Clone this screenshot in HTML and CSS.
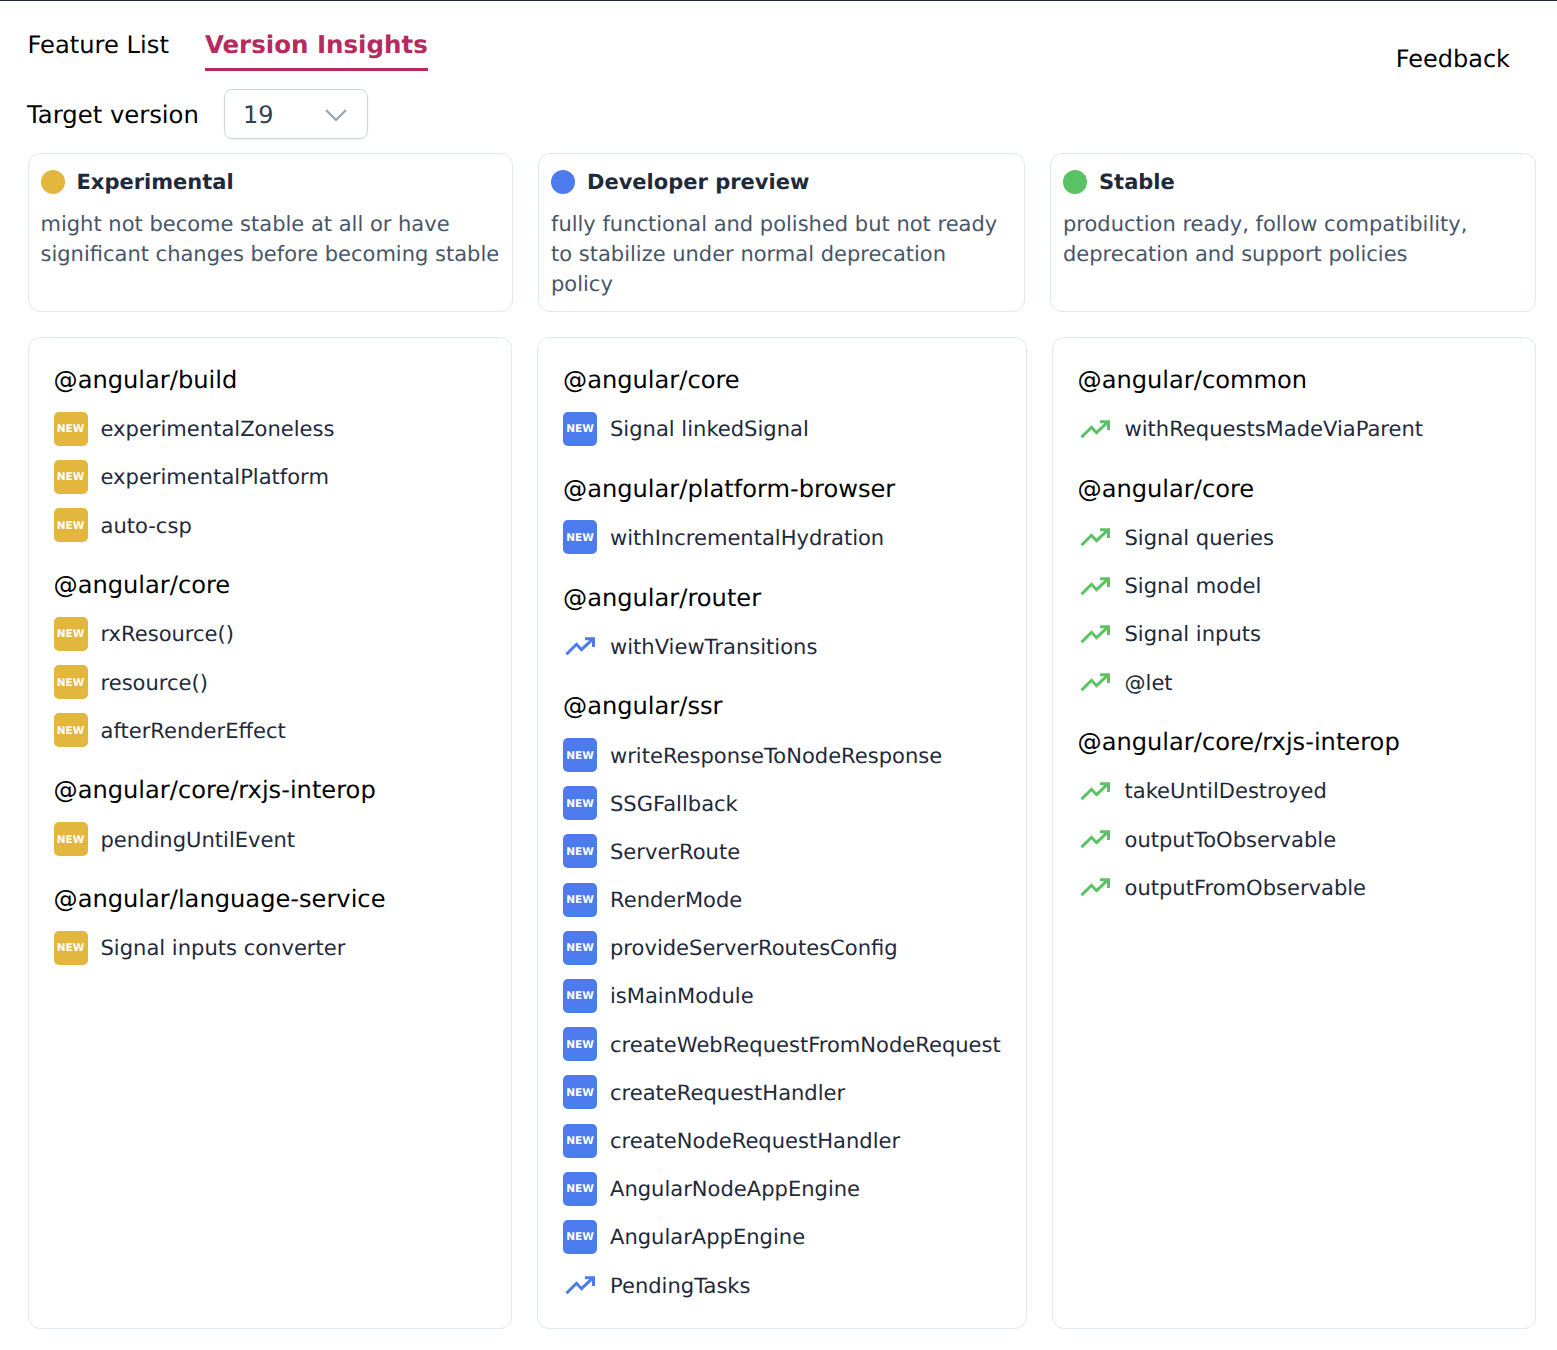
FILE: index.html
```html
<!DOCTYPE html>
<html lang="en">
<head>
<meta charset="utf-8">
<title>Version Insights</title>
<link rel="stylesheet" href="styles.css">
</head>
<body>
<svg class="defs" width="0" height="0" aria-hidden="true">
  <symbol id="trend" viewBox="0 0 34 26"><path d="M3.500 21.300 13.500 11.300l5 5.400L29.500 6.300M22 5.700H30.500v8.300" fill="none" stroke="currentColor" stroke-width="3"/></symbol>
</svg>
<header class="topbar">
  <nav class="tabs">
    <a class="tab">Feature List</a>
    <a class="tab tab-active">Version Insights</a>
  </nav>
  <a class="feedback">Feedback</a>
</header>
<div class="version-row">
  <span class="version-label">Target version</span>
  <div class="select"><span>19</span>
    <svg class="chevron" viewBox="0 0 24 14" width="24" height="14"><path d="M2 2l10 10L22 2" fill="none" stroke="#94a3b8" stroke-width="2.200"/></svg>
  </div>
</div>
<section class="legend">
  <article class="legend-card">
    <h3 class="legend-title"><i class="dot yellow-bg"></i>Experimental</h3>
    <p class="legend-text">might not become stable at all or have significant changes before becoming stable</p>
  </article>
  <article class="legend-card">
    <h3 class="legend-title"><i class="dot blue-bg"></i>Developer preview</h3>
    <p class="legend-text">fully functional and polished but not ready to stabilize under normal deprecation policy</p>
  </article>
  <article class="legend-card">
    <h3 class="legend-title"><i class="dot green-bg"></i>Stable</h3>
    <p class="legend-text">production ready, follow compatibility, deprecation and support policies</p>
  </article>
</section>
<main class="board">
  <section class="column">
    <div class="group"><h4>@angular/build</h4>
      <div class="item"><b class="badge yellow-bg">NEW</b>experimentalZoneless</div>
      <div class="item"><b class="badge yellow-bg">NEW</b>experimentalPlatform</div>
      <div class="item"><b class="badge yellow-bg">NEW</b>auto-csp</div>
    </div>
    <div class="group"><h4>@angular/core</h4>
      <div class="item"><b class="badge yellow-bg">NEW</b>rxResource()</div>
      <div class="item"><b class="badge yellow-bg">NEW</b>resource()</div>
      <div class="item"><b class="badge yellow-bg">NEW</b>afterRenderEffect</div>
    </div>
    <div class="group"><h4>@angular/core/rxjs-interop</h4>
      <div class="item"><b class="badge yellow-bg">NEW</b>pendingUntilEvent</div>
    </div>
    <div class="group"><h4>@angular/language-service</h4>
      <div class="item"><b class="badge yellow-bg">NEW</b>Signal inputs converter</div>
    </div>
  </section>
  <section class="column">
    <div class="group"><h4>@angular/core</h4>
      <div class="item"><b class="badge blue-bg">NEW</b>Signal linkedSignal</div>
    </div>
    <div class="group"><h4>@angular/platform-browser</h4>
      <div class="item"><b class="badge blue-bg">NEW</b>withIncrementalHydration</div>
    </div>
    <div class="group"><h4>@angular/router</h4>
      <div class="item"><svg class="trend blue"><use href="#trend"/></svg>withViewTransitions</div>
    </div>
    <div class="group"><h4>@angular/ssr</h4>
      <div class="item"><b class="badge blue-bg">NEW</b>writeResponseToNodeResponse</div>
      <div class="item"><b class="badge blue-bg">NEW</b>SSGFallback</div>
      <div class="item"><b class="badge blue-bg">NEW</b>ServerRoute</div>
      <div class="item"><b class="badge blue-bg">NEW</b>RenderMode</div>
      <div class="item"><b class="badge blue-bg">NEW</b>provideServerRoutesConfig</div>
      <div class="item"><b class="badge blue-bg">NEW</b>isMainModule</div>
      <div class="item"><b class="badge blue-bg">NEW</b>createWebRequestFromNodeRequest</div>
      <div class="item"><b class="badge blue-bg">NEW</b>createRequestHandler</div>
      <div class="item"><b class="badge blue-bg">NEW</b>createNodeRequestHandler</div>
      <div class="item"><b class="badge blue-bg">NEW</b>AngularNodeAppEngine</div>
      <div class="item"><b class="badge blue-bg">NEW</b>AngularAppEngine</div>
      <div class="item"><svg class="trend blue"><use href="#trend"/></svg>PendingTasks</div>
    </div>
  </section>
  <section class="column">
    <div class="group"><h4>@angular/common</h4>
      <div class="item"><svg class="trend green"><use href="#trend"/></svg>withRequestsMadeViaParent</div>
    </div>
    <div class="group"><h4>@angular/core</h4>
      <div class="item"><svg class="trend green"><use href="#trend"/></svg>Signal queries</div>
      <div class="item"><svg class="trend green"><use href="#trend"/></svg>Signal model</div>
      <div class="item"><svg class="trend green"><use href="#trend"/></svg>Signal inputs</div>
      <div class="item"><svg class="trend green"><use href="#trend"/></svg>@let</div>
    </div>
    <div class="group"><h4>@angular/core/rxjs-interop</h4>
      <div class="item"><svg class="trend green"><use href="#trend"/></svg>takeUntilDestroyed</div>
      <div class="item"><svg class="trend green"><use href="#trend"/></svg>outputToObservable</div>
      <div class="item"><svg class="trend green"><use href="#trend"/></svg>outputFromObservable</div>
    </div>
  </section>
</main>
</body>
</html>
```
FILE: styles.css
```css
* { box-sizing: border-box; }
html, body { margin: 0; height: 100%; }
body {
  background: #fff;
  border-top: 1.500px solid #1e293b;
  font-family: "DejaVu Sans", sans-serif;
  text-rendering: geometricPrecision;
  color: #000;
  overflow: hidden;
}
.defs { display: block; position: absolute; }
.topbar {
  display: flex;
  justify-content: space-between;
  padding: 0 47px 0 27.500px;
  height: 87px;
}
.tabs { display: flex; gap: 36px; height: 70px; align-items: flex-end; }
.tab { font-size: 24.200px; line-height: 36px; height: 53px; padding-top: 8.500px; display: block; }
.tab-active { font-size: 24.500px; font-weight: 700; color: #b52b5e; border-bottom: 3px solid #b52b5e; }
.feedback { font-size: 24px; line-height: 36px; margin-top: 39.500px; }
.version-row { display: flex; align-items: center; padding-left: 27px; gap: 25px; height: 51px; }
.version-label { font-size: 24.300px; padding-top: 2px; }
.select {
  width: 144px;
  height: 50px;
  border: 1.500px solid #cbd5e1;
  border-radius: 8px;
  box-shadow: 0 1px 2px rgba(15, 23, 42, .08);
  display: flex;
  align-items: center;
  justify-content: space-between;
  padding: 2px 19px 0 18px;
  font-size: 24px;
  color: #334155;
}
.legend {
  display: grid;
  grid-template-columns: 485.500px 487px 485.500px;
  gap: 25px;
  padding: 13.500px 0 0 27.500px;
}
.legend-card {
  height: 159px;
  border: 1.500px solid #e2e8f0;
  border-radius: 12px;
  padding: 14px 12px;
}
.legend-title {
  margin: 0 0 13.500px;
  display: flex;
  align-items: center;
  gap: 12px;
  font-size: 21px;
  line-height: 28px;
  font-weight: 700;
  color: #1e293b;
}
.dot { width: 24px; height: 24px; border-radius: 50%; flex: none; }
.legend-text { margin: 0; font-size: 21px; line-height: 30px; color: #475569; }
.yellow-bg { background: #e3b63e; }
.blue-bg { background: #4c7bed; }
.green-bg { background: #5ac264; }
.board {
  display: grid;
  grid-template-columns: 484.500px 489.500px 484px;
  gap: 25px;
  padding: 25px 0 0 27.500px;
}
.column {
  height: 992px;
  border: 1.500px solid #e2e8f0;
  border-radius: 12px;
  padding: 24.500px 25px;
  display: flex;
  flex-direction: column;
  gap: 25.100px;
}
.group { display: flex; flex-direction: column; gap: 14.200px; }
.group h4 { margin: 0; font-size: 24.150px; line-height: 36px; font-weight: 400; margin-bottom: -0.500px; }
.item { display: flex; align-items: center; height: 34px; font-size: 21.050px; color: #1e293b; }
.badge {
  width: 34px;
  height: 34px;
  border-radius: 5px;
  margin-right: 13px;
  padding-top: 1px;
  flex: none;
  color: #fff;
  font-size: 10.500px;
  font-weight: 700;
  display: flex;
  align-items: center;
  justify-content: center;
}
.trend { width: 34px; height: 26px; margin-right: 13px; flex: none; }
.blue { color: #4c7bed; }
.green { color: #5ac264; }
```
